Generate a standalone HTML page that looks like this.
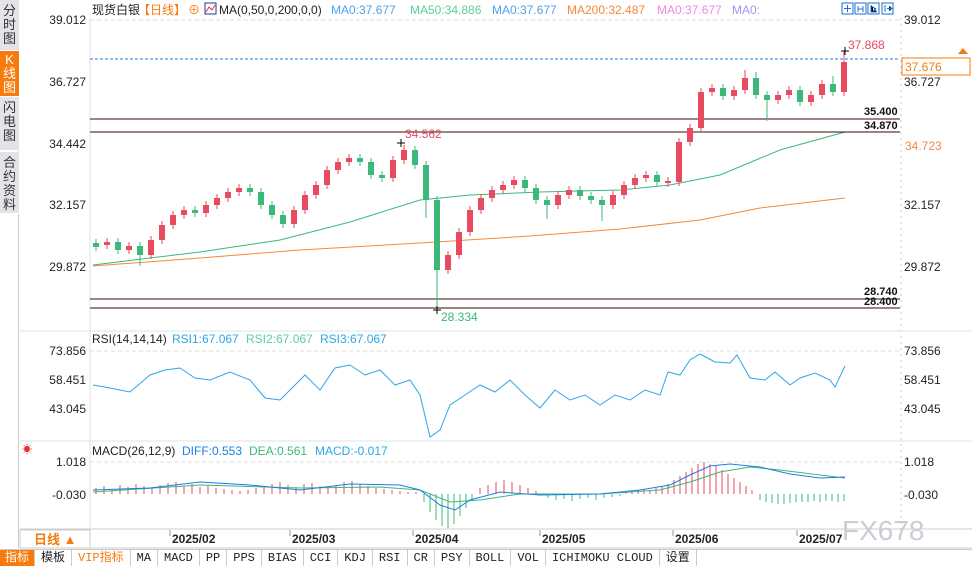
<!DOCTYPE html>
<html><head><meta charset="utf-8"><style>
*{margin:0;padding:0;box-sizing:border-box}
body{width:972px;height:566px;overflow:hidden;background:#fff;font-family:"Liberation Sans","Noto Sans CJK SC",sans-serif;position:relative}
.side{position:absolute;left:0;top:0;width:19px;height:548px;background:#fff;border-right:1px solid #ccc}
.tab{position:absolute;left:0;width:19px;background:#e4e4e8;color:#333;font-size:13px;line-height:14px;text-align:center;padding-top:4px;border-bottom:1px solid #fff}
.tab.on{background:#f77a0c;color:#fff}
svg{position:absolute;left:0;top:0}
.bar{position:absolute;left:0;top:549px;width:972px;height:17px;background:#fff;border-top:1px solid #ccc;display:flex;font-size:12px;font-family:"Liberation Mono","Noto Sans CJK SC",monospace}
.bar div{border-right:1px solid #ccc;padding:0 6px;line-height:16px;color:#222}
</style></head><body>
<div class="side">
<div class="tab" style="top:0;height:51px">分<br>时<br>图</div>
<div class="tab on" style="top:51px;height:46px;padding-top:2px">K<br>线<br>图</div>
<div class="tab" style="top:97px;height:54px">闪<br>电<br>图</div>
<div class="tab" style="top:152px;height:62px">合<br>约<br>资<br>料</div>
</div>
<svg width="972" height="566" xmlns="http://www.w3.org/2000/svg" font-family="Liberation Sans, Noto Sans CJK SC, sans-serif" font-size="12">
<g stroke-width="1">
<line x1="90" y1="18" x2="90" y2="530" stroke="#e0e0e0"/>
<line x1="901" y1="18" x2="901" y2="530" stroke="#ccc" stroke-dasharray="2,4"/>
<line x1="20" y1="331" x2="972" y2="331" stroke="#dde3e8"/>
<line x1="20" y1="441" x2="972" y2="441" stroke="#dde3e8"/>
<line x1="20" y1="529" x2="972" y2="529" stroke="#ccc"/>
<line x1="90" y1="548" x2="972" y2="548" stroke="#ccc"/>
<line x1="90" y1="20" x2="900" y2="20" stroke="#ddd" stroke-dasharray="4,3"/>
<line x1="90" y1="351" x2="900" y2="351" stroke="#ddd" stroke-dasharray="4,3"/>
<line x1="90" y1="462" x2="900" y2="462" stroke="#ddd" stroke-dasharray="4,3"/>
</g>
<text x="92" y="14" fill="#222">现货白银</text>
<text x="138" y="14" fill="#f77a0c">【日线】</text>
<text x="188" y="14" fill="#f77a0c">⊕</text>
<rect x="205" y="3" width="11" height="11" fill="#fff" stroke="#1a3d8f"/>
<polyline points="206,12 209,7 212,10 215,5" fill="none" stroke="#d33"/>
<text x="219" y="14" fill="#222">MA(0,50,0,200,0,0)</text>
<text x="331" y="14" fill="#4aa3f0">MA0:37.677</text>
<text x="410" y="14" fill="#5ccf9a">MA50:34.886</text>
<text x="492" y="14" fill="#4aa3f0">MA0:37.677</text>
<text x="567" y="14" fill="#f6883a">MA200:32.487</text>
<text x="657" y="14" fill="#ec8ae0">MA0:37.677</text>
<text x="732" y="14" fill="#a594f0">MA0:</text>
<g fill="#fff" stroke="#1b6fd0"><rect x="842" y="3" width="11" height="11"/><rect x="855" y="3" width="11" height="11"/><rect x="868" y="3" width="11" height="11"/><rect x="882" y="3" width="11" height="11"/></g>
<g stroke="#1b6fd0"><path d="M847.5 5v7M844 8.5h7M858 6v6M863 6v6M858 9h5M871 5v7h6M873 7l3 2-3 2M885 5v7M887 8.5h4M889 6l3 2.5-3 2.5"/></g>
<g fill="#222">
<text x="904" y="24">39.012</text><text x="904" y="86">36.727</text><text x="904" y="148">34.442</text><text x="904" y="209">32.157</text><text x="904" y="271">29.872</text>
<text x="904" y="355">73.856</text><text x="904" y="384">58.451</text><text x="904" y="413">43.045</text>
<text x="904" y="466">1.018</text><text x="904" y="499">-0.030</text>
</g>
<g fill="#222" text-anchor="end">
<text x="86" y="24">39.012</text><text x="86" y="86">36.727</text><text x="86" y="148">34.442</text><text x="86" y="209">32.157</text><text x="86" y="271">29.872</text>
<text x="86" y="355">73.856</text><text x="86" y="384">58.451</text><text x="86" y="413">43.045</text>
<text x="86" y="466">1.018</text><text x="86" y="499">-0.030</text>
</g>
<polyline fill="none" stroke="#3cb87a" points="93,265 150,258 200,252 280,240 350,222 420,200 470,195 540,192 620,190 670,185 720,175 780,150 845,132"/>
<polyline fill="none" stroke="#f6883a" points="93,266 200,258 300,250 420,243 530,236 620,229 700,220 760,208 845,198"/>
<line x1="90" y1="59" x2="900" y2="59" stroke="#1a7fe8" stroke-dasharray="3,2"/>
<g stroke="#3a0a0a"><line x1="90" y1="119" x2="900" y2="119"/><line x1="90" y1="132" x2="900" y2="132"/><line x1="90" y1="299" x2="900" y2="299"/><line x1="90" y1="308" x2="900" y2="308"/></g>
<g fill="#e84a5f">
<rect x="104" y="242" width="6" height="3"/><rect x="126" y="246" width="6" height="4"/><rect x="148" y="240" width="6" height="15"/><rect x="159" y="225" width="6" height="15"/><rect x="170" y="215" width="6" height="10"/><rect x="181" y="210" width="6" height="5"/><rect x="203" y="205" width="6" height="8"/><rect x="214" y="198" width="6" height="7"/><rect x="225" y="192" width="6" height="6"/><rect x="236" y="188" width="6" height="4"/><rect x="291" y="210" width="6" height="14"/><rect x="302" y="195" width="6" height="15"/><rect x="313" y="185" width="6" height="10"/><rect x="324" y="170" width="6" height="15"/><rect x="335" y="162" width="6" height="8"/><rect x="346" y="158" width="6" height="4"/><rect x="390" y="160" width="6" height="18"/><rect x="401" y="150" width="6" height="10"/><rect x="445" y="255" width="6" height="15"/><rect x="456" y="232" width="6" height="23"/><rect x="467" y="210" width="6" height="22"/><rect x="478" y="198" width="6" height="12"/><rect x="489" y="190" width="6" height="8"/><rect x="500" y="185" width="6" height="5"/><rect x="511" y="180" width="6" height="5"/><rect x="555" y="195" width="6" height="10"/><rect x="566" y="190" width="6" height="5"/><rect x="610" y="195" width="6" height="10"/><rect x="621" y="185" width="6" height="10"/><rect x="632" y="178" width="6" height="7"/><rect x="643" y="175" width="6" height="3"/><rect x="665" y="181" width="6" height="2"/><rect x="676" y="142" width="6" height="40"/><rect x="687" y="128" width="6" height="14"/><rect x="698" y="92" width="6" height="36"/><rect x="709" y="88" width="6" height="4"/><rect x="731" y="90" width="6" height="6"/><rect x="742" y="78" width="6" height="12"/><rect x="775" y="95" width="6" height="5"/><rect x="786" y="90" width="6" height="5"/><rect x="808" y="95" width="6" height="7"/><rect x="819" y="84" width="6" height="11"/><rect x="841" y="62" width="6" height="30"/>
</g>
<path stroke="#e84a5f" fill="none" d="M107 238V249M129 242V254M151 236V259M162 221V244M173 211V229M184 206V219M206 201V217M217 194V209M228 188V202M239 184V196M294 206V228M305 191V214M316 181V199M327 166V189M338 158V174M349 154V166M393 156V182M404 145V164M448 251V274M459 228V259M470 206V236M481 194V214M492 186V202M503 181V194M514 176V189M558 191V209M569 186V199M613 191V209M624 181V199M635 174V189M646 171V182M668 177V187M679 138V186M690 124V146M701 88V132M712 84V96M734 86V100M745 70V94M778 91V104M789 86V99M811 91V106M822 80V99M844 51V96"/>
<g fill="#3cb87a">
<rect x="93" y="243" width="6" height="4"/><rect x="115" y="242" width="6" height="8"/><rect x="137" y="246" width="6" height="9"/><rect x="192" y="210" width="6" height="3"/><rect x="247" y="188" width="6" height="4"/><rect x="258" y="192" width="6" height="13"/><rect x="269" y="205" width="6" height="10"/><rect x="280" y="215" width="6" height="9"/><rect x="357" y="158" width="6" height="4"/><rect x="368" y="162" width="6" height="13"/><rect x="379" y="175" width="6" height="3"/><rect x="412" y="150" width="6" height="15"/><rect x="423" y="165" width="6" height="35"/><rect x="434" y="200" width="6" height="70"/><rect x="522" y="180" width="6" height="8"/><rect x="533" y="188" width="6" height="12"/><rect x="544" y="200" width="6" height="5"/><rect x="577" y="190" width="6" height="6"/><rect x="588" y="196" width="6" height="4"/><rect x="599" y="200" width="6" height="5"/><rect x="654" y="175" width="6" height="7"/><rect x="720" y="88" width="6" height="8"/><rect x="753" y="78" width="6" height="17"/><rect x="764" y="95" width="6" height="5"/><rect x="797" y="90" width="6" height="12"/><rect x="830" y="84" width="6" height="8"/>
</g>
<path stroke="#3cb87a" fill="none" d="M96 239V251M118 238V254M140 242V266M195 206V217M250 184V196M261 188V209M272 201V219M283 211V228M360 154V166M371 158V179M382 171V182M415 146V169M426 161V218M437 196V309M525 176V192M536 184V204M547 196V219M580 186V200M591 192V204M602 196V221M657 171V186M723 84V100M756 72V99M767 91V121M800 86V106M833 76V96"/>
<g font-size="11" font-weight="bold" fill="#111">
<text x="864" y="115">35.400</text><text x="864" y="129">34.870</text><text x="864" y="295">28.740</text><text x="864" y="305">28.400</text>
</g>
<text x="848" y="49" fill="#e84a5f">37.868</text>
<text x="405" y="138" fill="#e84a5f">34.562</text>
<text x="441" y="321" fill="#3cb87a">28.334</text>
<path stroke="#000" d="M841 51h8M845 47v8M397 143h8M401 139v8M433 310h8M437 306v8"/>
<rect x="902" y="58" width="68" height="17" fill="#fff" stroke="#f77a0c"/>
<text x="905" y="71" fill="#f77a0c">37.676</text>
<polygon points="963,48 968,54 958,54" fill="#f77a0c"/>
<rect x="902" y="138" width="68" height="15" fill="#fff"/>
<text x="905" y="150" fill="#f6883a">34.723</text>
<text x="92" y="343" fill="#222">RSI(14,14,14)</text>
<text x="172" y="343" fill="#2aa8e6">RSI1:67.067</text>
<text x="246" y="343" fill="#5ccf9a">RSI2:67.067</text>
<text x="320" y="343" fill="#2aa8e6">RSI3:67.067</text>
<polyline fill="none" stroke="#2aa8e6" points="93,385 110,388 130,392 150,375 165,370 180,368 195,378 210,380 230,372 250,380 265,398 280,400 295,385 305,375 320,390 335,368 350,365 365,375 380,370 395,385 410,380 420,395 430,437 440,430 450,405 465,395 480,385 495,392 510,380 525,395 540,408 555,390 570,400 585,395 600,405 615,395 630,400 645,390 660,395 668,372 680,375 690,360 700,354 715,362 730,363 737,355 750,378 765,380 775,372 790,385 800,378 815,373 830,380 835,387 845,366"/>
<text x="22" y="453" fill="#d33" font-size="10">☀</text>
<text x="92" y="455" fill="#222">MACD(26,12,9)</text>
<text x="182" y="455" fill="#1a7fe8">DIFF:0.553</text>
<text x="249" y="455" fill="#3cb87a">DEA:0.561</text>
<text x="315" y="455" fill="#2aa8e6">MACD:-0.017</text>
<path stroke="#e84a5f" d="M96 494v-6M104 494v-8M112 494v-5M120 494v-9M128 494v-7M136 494v-10M144 494v-8M152 494v-6M160 494v-9M168 494v-11M176 494v-12M184 494v-8M192 494v-10M200 494v-7M208 494v-9M216 494v-6M224 494v-5M232 494v-4M240 494v-3M248 494v-4M256 494v-6M264 494v-8M272 494v-10M280 494v-12M288 494v-9M296 494v-7M304 494v-10M312 494v-11M320 494v-8M328 494v-6M336 494v-9M344 494v-12M352 494v-13M360 494v-10M368 494v-8M376 494v-6M384 494v-5M392 494v-4M400 494v-3M408 494v-2M416 494v-2M480 494v-6M488 494v-9M496 494v-12M504 494v-14M512 494v-12M520 494v-9M528 494v-6M536 494v-3M626 494v-2M632 494v-3M638 494v-4M644 494v-5M650 494v-4M656 494v-6M662 494v-8M668 494v-10M674 494v-14M680 494v-18M686 494v-22M692 494v-26M698 494v-30M704 494v-32M710 494v-30M716 494v-28M722 494v-24M728 494v-20M734 494v-16M740 494v-12M746 494v-8M752 494v-4"/>
<path stroke="#3cb87a" d="M424 494v8M430 494v18M436 494v26M442 494v32M448 494v34M454 494v30M460 494v22M466 494v14M472 494v6M548 494v4M556 494v6M564 494v5M572 494v7M580 494v5M588 494v4M596 494v6M604 494v4M612 494v3M620 494v2M760 494v6M766 494v8M772 494v9M778 494v10M784 494v10M790 494v9M796 494v8M802 494v8M808 494v8M814 494v7M820 494v8M826 494v7M832 494v7M838 494v8M844 494v7"/>
<polyline fill="none" stroke="#3cb87a" points="93,492 200,485 300,488 380,487 420,490 450,502 480,500 520,494 600,494 660,490 690,482 720,472 750,467 780,470 820,475 845,478"/>
<polyline fill="none" stroke="#1a7fe8" points="93,490 150,488 200,482 250,485 300,490 350,484 400,485 420,490 440,505 455,510 470,500 500,492 540,495 600,494 640,490 670,485 690,475 710,466 730,464 760,467 790,474 820,478 845,477"/>
<g stroke="#999"><path d="M170 530v6M290 530v6M413 530v6M540 530v6M673 530v6M797 530v6"/></g>
<g fill="#222" font-weight="bold">
<text x="172" y="543">2025/02</text><text x="292" y="543">2025/03</text><text x="415" y="543">2025/04</text><text x="542" y="543">2025/05</text><text x="675" y="543">2025/06</text><text x="799" y="543">2025/07</text>
</g>
<rect x="20" y="530" width="70" height="18" fill="#fff" stroke="#ccc"/>
<text x="34" y="544" fill="#f77a0c" font-size="13" font-weight="bold">日线 ▲</text>
<text x="842" y="540" fill="#c8cdd6" font-size="28">FX678</text>
</svg>
<div class="bar">
<div style="background:#f77a0c;color:#fff;padding:0 5px">指标</div><div>模板</div><div style="color:#f77a0c">VIP指标</div><div>MA</div><div>MACD</div><div>PP</div><div>PPS</div><div>BIAS</div><div>CCI</div><div>KDJ</div><div>RSI</div><div>CR</div><div>PSY</div><div>BOLL</div><div>VOL</div><div>ICHIMOKU CLOUD</div><div>设置</div>
</div>
</body></html>
